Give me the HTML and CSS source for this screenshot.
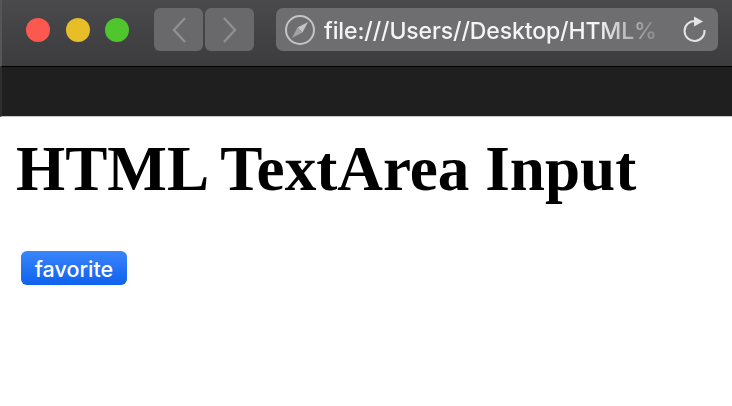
FILE: index.html
```html
<!DOCTYPE html>
<html lang="en">
<head>
    <meta charset="UTF-8">
    <meta name="viewport" content="width=device-width, initial-scale=1.0">
    <title>HTML TextArea Input</title>
    <link rel="stylesheet" href="styles.css">
</head>
<body>
    <div class="toolbar">
        <div class="lights">
            <span class="light red"></span>
            <span class="light yellow"></span>
            <span class="light green"></span>
        </div>
        <div class="nav">
            <div class="nav-btn">
                <svg width="16" height="28" viewBox="0 0 16 28"><path d="M14 2 L3 14 L14 26" fill="none" stroke="#909090" stroke-width="2.4"/></svg>
            </div>
            <div class="nav-btn">
                <svg width="16" height="28" viewBox="0 0 16 28"><path d="M2 2 L13 14 L2 26" fill="none" stroke="#909090" stroke-width="2.4"/></svg>
            </div>
        </div>
        <div class="url-bar">
            <svg class="compass" width="32" height="32" viewBox="0 0 32 32">
                <circle cx="16" cy="16" r="14" fill="none" stroke="#c4c4c4" stroke-width="2"/>
                <path d="M24 8 L13.5 13.5 L18.5 18.5 Z" fill="#c4c4c4"/>
                <path d="M8 24 L13.5 13.5 L18.5 18.5 Z" fill="#a2a2a2"/>
            </svg>
            <span class="url-text">file:///Users//Desktop/HTML%</span>
            <svg class="reload" width="28" height="30" viewBox="0 0 28 30">
                <path d="M15 5 A10 10 0 1 0 24.5 14" fill="none" stroke="#e4e4e4" stroke-width="2"/>
                <path d="M14 0.5 L23 5.5 L14 10.5 Z" fill="#e4e4e4"/>
            </svg>
        </div>
    </div>
    <div class="tab-strip"></div>
    <div class="content">
        <h1>HTML TextArea Input</h1>
        <button class="fav-btn">favorite</button>
    </div>
</body>
</html>
```

FILE: styles.css
```css
html, body {
    margin: 0;
    padding: 0;
}

body {
    width: 732px;
    height: 406px;
    overflow: hidden;
    background-color: #fff;
}

.toolbar {
    height: 67px;
    box-sizing: border-box;
    display: flex;
    align-items: flex-start;
    padding: 8px 14px 0 24px;
    background: linear-gradient(#4a4a4c, #3c3c3e);
    border-left: 2px solid #565658;
    border-bottom: 1px solid #000;
}

.lights {
    display: flex;
    gap: 15.5px;
    margin-top: 9.5px;
}

.light {
    width: 24px;
    height: 24px;
    border-radius: 50%;
}

.red { background-color: #fd5850; }
.yellow { background-color: #e7bd28; }
.green { background-color: #4fc52e; }

.nav {
    display: flex;
    gap: 2px;
    margin-left: 25px;
}

.nav-btn {
    width: 49px;
    height: 43px;
    border-radius: 6px;
    background-color: #69696b;
    display: flex;
    align-items: center;
    justify-content: center;
}

.url-bar {
    width: 442px;
    height: 43px;
    margin-left: 22px;
    border-radius: 7px;
    background-color: #6e6e70;
    display: flex;
    align-items: center;
}

.compass {
    margin-left: 8px;
}

.url-text {
    margin-left: 8px;
    padding-top: 2px;
    width: 334px;
    overflow: hidden;
    white-space: nowrap;
    font-family: "Inter", "Liberation Sans", sans-serif;
    font-size: 23px;
    font-weight: 500;
    letter-spacing: -0.12px;
    color: #f4f4f4;
    -webkit-mask-image: linear-gradient(to right, #000 82%, rgba(0, 0, 0, 0.25) 98%);
    mask-image: linear-gradient(to right, #000 82%, rgba(0, 0, 0, 0.25) 98%);
}

.reload {
    margin: 2px 0 0 22px;
}

.tab-strip {
    height: 49px;
    background-color: #1f1f1f;
    border-left: 2px solid #2e2e2e;
    border-bottom: 1px solid #c8c8c8;
}

.content {
    padding: 0 16px;
}

h1 {
    margin: 0;
    padding-top: 15px;
    font-family: "Liberation Serif", serif;
    font-size: 63.2px;
    line-height: 74px;
    font-weight: bold;
    color: #000;
}

.fav-btn {
    display: block;
    margin: 45px 0 0 5px;
    width: 106px;
    height: 34px;
    padding: 2px 0 0;
    border: none;
    border-radius: 6px;
    background: linear-gradient(#3a85fb, #0f62ee);
    color: #fff;
    font-family: "Inter", "Liberation Sans", sans-serif;
    font-size: 21.5px;
    font-weight: 500;
}
```
